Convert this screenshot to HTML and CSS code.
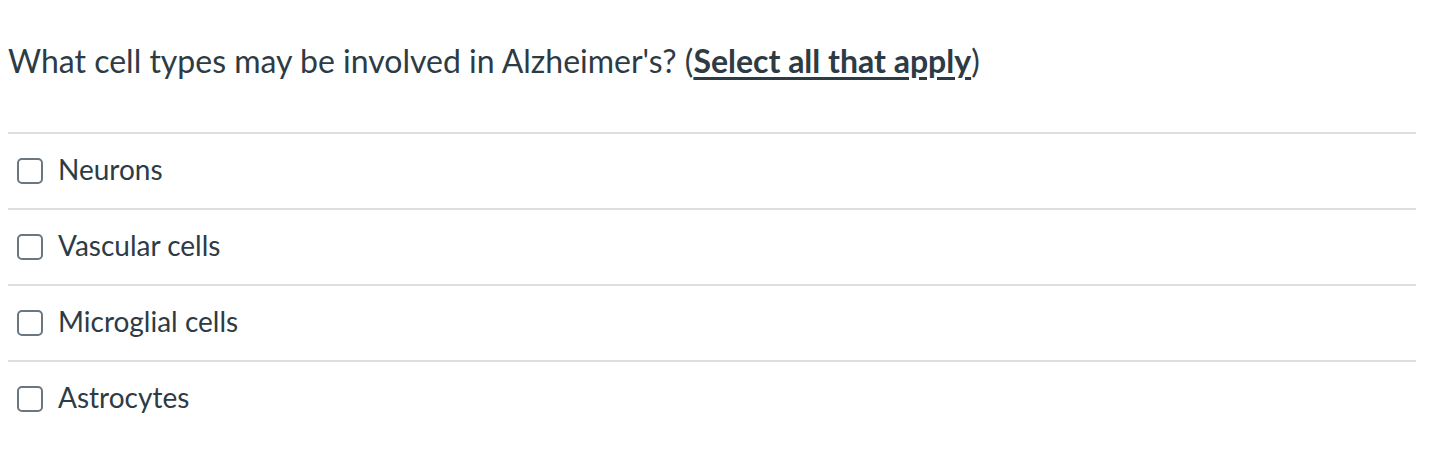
FILE: index.html
```html
<!DOCTYPE html>
<html>
<head>
<meta charset="utf-8">
<link rel="stylesheet" href="styles.css">
</head>
<body>
<div class="question">
  <div class="question-text">What cell types may be involved in Alzheimer's? (<strong class="hint">Select all that apply</strong>)</div>
  <div class="answers">
    <label class="answer"><span class="box"></span><span class="label">Neurons</span></label>
    <label class="answer"><span class="box"></span><span class="label">Vascular cells</span></label>
    <label class="answer"><span class="box"></span><span class="label">Microglial cells</span></label>
    <label class="answer"><span class="box"></span><span class="label">Astrocytes</span></label>
  </div>
</div>
</body>
</html>
```
FILE: styles.css
```css
html, body { margin: 0; padding: 0; background: #fff; }
body { font-family: Lato, "Open Sans", sans-serif; color: #2d3b45; }
.question { padding: 0 22px 0 8px; }
.question-text {
  font-size: 32px;
  line-height: 38px;
  padding-top: 42px;
  padding-bottom: 52px;
  border-bottom: 2px solid #dcdfe1;
}
.hint { font-weight: 700; text-decoration: underline; text-decoration-thickness: 3px; text-underline-offset: 4px; }
.answers { display: flex; flex-direction: column; }
.answer {
  display: flex;
  align-items: center;
  height: 74px;
  border-bottom: 2px solid #dcdfe1;
  font-size: 28px;
}
.label { position: relative; top: -2px; }
.answer:last-child { border-bottom: none; }
.box {
  width: 22px; height: 22px;
  border: 2px solid #6b7780;
  border-radius: 5px;
  margin-left: 9px;
  margin-right: 15px;
  flex: none;
}
```
